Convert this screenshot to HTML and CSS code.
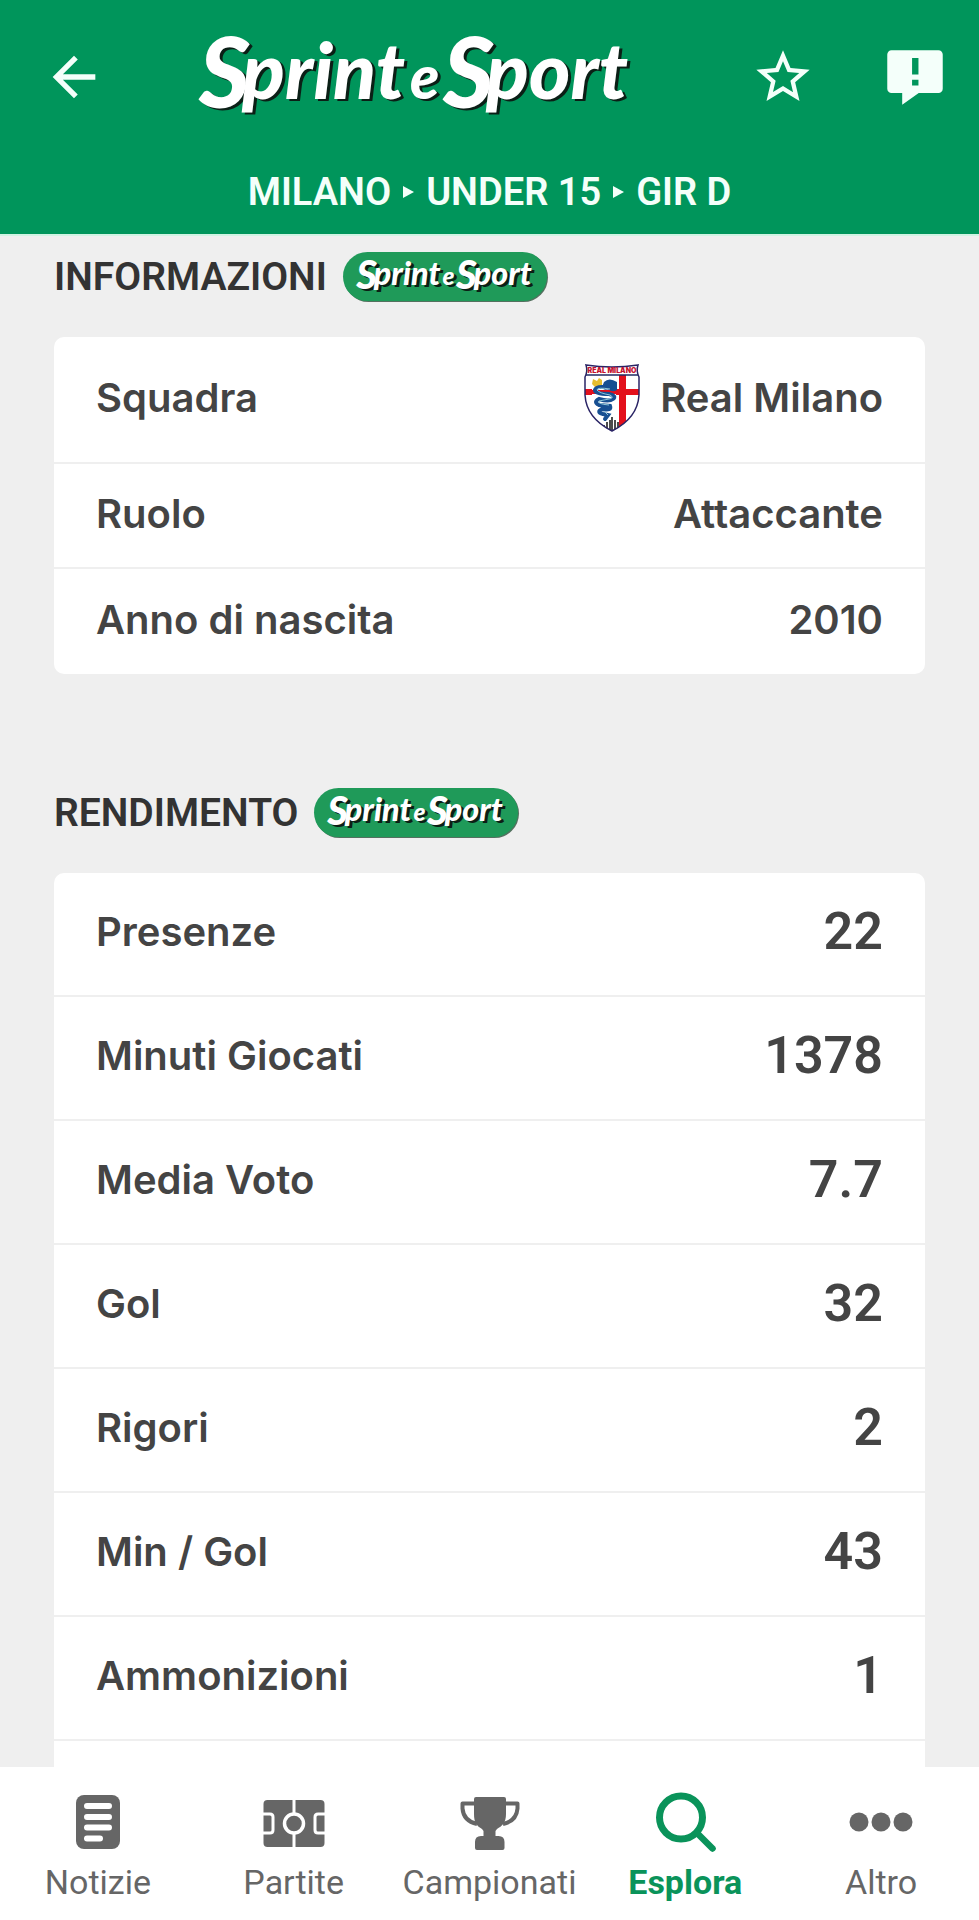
FILE: index.html
```html
<!DOCTYPE html>
<html lang="it">
<head>
    <meta charset="UTF-8">
    <meta name="viewport" content="width=device-width, initial-scale=1">
    <title>Sprint e Sport</title>
    <link rel="stylesheet" href="styles.css">
</head>
<body>
    <!-- === LOGO === -->
    <svg class="sprites" aria-hidden="true">
        <symbol id="logo" viewBox="0 0 440 88">
            <g class="logo-text">
                <text class="logo-cap" x="3" y="75">S</text>
                <text class="logo-word" x="46" y="66">print</text>
                <text class="logo-e" x="214" y="66">e</text>
                <text class="logo-cap" x="247" y="75">S</text>
                <text class="logo-word" x="290" y="66">port</text>
            </g>
        </symbol>
    </svg>

    <!-- === HEADER === -->
    <header class="header">
        <div class="topbar">
            <button class="icon-btn" aria-label="Indietro">
                <svg viewBox="0 0 24 24"><path d="M20 11H7.83l5.59-5.59L12 4l-8 8 8 8 1.41-1.41L7.83 13H20z"/></svg>
            </button>
            <svg class="logo" role="img" aria-label="Sprint e Sport"><use href="#logo"/></svg>
            <div class="actions">
                <button class="icon-btn" aria-label="Preferiti">
                    <svg viewBox="0 0 24 24"><path d="M22 9.24l-7.19-.62L12 2 9.19 8.63 2 9.24l5.46 4.73L5.82 21 12 17.27 18.18 21l-1.63-7.03zM12 15.4l-3.76 2.27 1-4.28-3.32-2.88 4.38-.38L12 6.1l1.71 4.04 4.38.38-3.32 2.88 1 4.28z"/></svg>
                </button>
                <button class="icon-btn" aria-label="Segnala">
                    <svg viewBox="0 0 24 24"><path fill-rule="evenodd" d="M3.200 2h17.600A1.600 1.600 0 0 1 22.400 3.600v12.800a1.600 1.600 0 0 1-1.600 1.600h-7.400l-6.200 4.400V18H3.200A1.600 1.600 0 0 1 1.600 16.400V3.600A1.600 1.600 0 0 1 3.200 2zM10.900 4.900v6.200h2.400V4.900zM10.900 13v2.200h2.400V13z"/></svg>
                </button>
            </div>
        </div>
        <div class="breadcrumb">
            <span>MILANO</span>
            <i class="arrow"></i>
            <span>UNDER 15</span>
            <i class="arrow"></i>
            <span>GIR D</span>
        </div>
    </header>

    <!-- === CONTENT === -->
    <main class="content">
        <section class="section">
            <div class="section-head">
                <h2>INFORMAZIONI</h2>
                <span class="pill"><svg role="img" aria-label="Sprint e Sport"><use href="#logo"/></svg></span>
            </div>
            <table class="card info">
                <tr class="team-row">
                    <th scope="row">Squadra</th>
                    <td>
                        <div class="team">
                            <svg class="crest" viewBox="0 0 56 70" aria-hidden="true">
                                <clipPath id="shield"><path d="M2 2Q28 6 54 2Q52 8 55 14V32C54 49 42 61 28 68C14 61 2 49 1 32V14Q4 8 2 2z"/></clipPath>
                                <g clip-path="url(#shield)">
                                    <path fill="#fff" d="M0 0h56v70H0z"/>
                                    <path fill="#e3101c" d="M35 12h7v56h-7zM0 26h56v6H0z"/>
                                    <path fill="#fff" d="M8 14h24v20H8z"/>
                                    <path fill="#e3101c" d="M8 27h24v4H8z"/>
                                    <path fill="none" stroke="#1f2a63" stroke-width="1.500" d="M0 12h56"/>
                                    <path fill="#e5bd2f" d="M9 16l4 2 2-3 3 2v6l-7 1-3-3z"/>
                                    <path fill="#174f92" d="M20 19q5-5 13 0v8q-5 3-9-1-5 2-6-2z"/>
                                    <path fill="none" stroke="#174f92" stroke-width="4" stroke-linecap="round" d="M27 25Q12 22 11 27Q11 31 25 31Q33 33 29 36Q25 39 15 36Q9 39 15 42L26 43Q28 48 18 46Q12 49 19 51L24 52L21 56"/>
                                    <path fill="none" stroke="#8ec6d8" stroke-width="1" d="M26 26Q13 24 13 27Q15 30 26 32Q31 35 25 36L15 38Q13 41 25 42M20 48l4 4"/>
                                    <path stroke="#111" stroke-width="1.500" d="M20 62v6M23 59v9M26 57v11M28 54v14M31 57v11M34 59v9M37 62v6"/>
                                </g>
                                <path fill="none" stroke="#2a2465" stroke-width="1.500" d="M2 2Q28 6 54 2Q52 8 55 14V32C54 49 42 61 28 68C14 61 2 49 1 32V14Q4 8 2 2z"/>
                                <text class="crest-text" x="28" y="10">REAL MILANO</text>
                            </svg>
                            <span>Real Milano</span>
                        </div>
                    </td>
                </tr>
                <tr><th scope="row">Ruolo</th><td>Attaccante</td></tr>
                <tr><th scope="row">Anno di nascita</th><td>2010</td></tr>
            </table>
        </section>

        <section class="section">
            <div class="section-head">
                <h2>RENDIMENTO</h2>
                <span class="pill"><svg role="img" aria-label="Sprint e Sport"><use href="#logo"/></svg></span>
            </div>
            <table class="card stats">
                <tr><th scope="row">Presenze</th><td>22</td></tr>
                <tr><th scope="row">Minuti Giocati</th><td>1378</td></tr>
                <tr><th scope="row">Media Voto</th><td>7.7</td></tr>
                <tr><th scope="row">Gol</th><td>32</td></tr>
                <tr><th scope="row">Rigori</th><td>2</td></tr>
                <tr><th scope="row">Min / Gol</th><td>43</td></tr>
                <tr><th scope="row">Ammonizioni</th><td>1</td></tr>
                <tr><td colspan="2"></td></tr>
            </table>
        </section>
    </main>

    <!-- === BOTTOM NAV === -->
    <nav class="tabs">
        <a href="#notizie" class="tab">
            <svg viewBox="0 0 64 64"><rect x="10" y="5" width="44" height="54" rx="8"/><path stroke="#fff" stroke-width="6" stroke-linecap="round" d="M21 16h22M21 27h22M21 37.500h22M21 48.500h13"/></svg>
            <span>Notizie</span>
        </a>
        <a href="#partite" class="tab">
            <svg viewBox="0 0 64 64"><rect x="1.500" y="10" width="61" height="47" rx="4"/><path fill="none" stroke="#fff" stroke-width="3" d="M32 9v49M0 24h8q3 0 3 3v13q0 3-3 3H0M64 24h-8q-3 0-3 3v13q0 3 3 3h8"/><circle cx="32" cy="33.500" r="9.500" stroke="#fff" stroke-width="3.500"/></svg>
            <span>Partite</span>
        </a>
        <a href="#campionati" class="tab">
            <svg viewBox="0 0 64 64"><path d="M17 9q0-2 2-2h28q2 0 2 2v15c0 9-4 12-9 15l-1.500 2v5h3q6 0 6 6v6q0 2-2 2H20q-2 0-2-2v-6q0-6 6-6h2.500v-5L25 39c-5-3-8-6-8-15z"/><path fill="none" stroke="#666" stroke-width="4" stroke-linejoin="round" d="M18 13.500H5.500v5Q6.500 31 20 34M48 13.500h12.500v5Q59.500 31 46 34"/></svg>
            <span>Campionati</span>
        </a>
        <a href="#esplora" class="tab active" aria-current="page">
            <svg viewBox="0 0 64 64"><g fill="none" stroke="currentColor"><circle cx="28" cy="27.500" r="21.500" stroke-width="7"/><path stroke-width="6.500" stroke-linecap="round" d="M44 43l15.500 15.500"/></g></svg>
            <span>Esplora</span>
        </a>
        <a href="#altro" class="tab">
            <svg viewBox="0 0 64 64"><circle cx="10" cy="32" r="9.500"/><circle cx="32" cy="32" r="9.500"/><circle cx="54" cy="32" r="9.500"/></svg>
            <span>Altro</span>
        </a>
    </nav>
</body>
</html>
```

FILE: styles.css
```css
/* === BASE STYLES === */
* {
    margin: 0;
    padding: 0;
    box-sizing: border-box;
}

body {
    display: flex;
    flex-direction: column;
    height: 100vh;
    overflow: hidden;
    font-family: Roboto, "Liberation Sans", sans-serif;
    font-size: 38px;
    font-weight: 600;
    line-height: 48px;
    background: #efefef;
    color: #444;
}

svg {
    display: block;
}

/* === LOGO === */
.sprites {
    display: none;
}

.logo {
    width: 440px;
    height: 88px;
    margin-left: 90px;
}

.logo-text {
    font-family: Lato, "Open Sans", sans-serif;
    font-weight: 900;
    font-style: italic;
    fill: #fff;
    text-shadow: 3px 2px 0 #0b1f16;
}

.logo-cap {
    font-size: 98px;
}

.logo-word {
    font-size: 79px;
}

.logo-e {
    font-size: 60px;
}

/* === HEADER === */
.header {
    flex: none;
    background: #00955b;
    border-bottom: 2px solid #d0f3e3;
    color: #f4fffa;
}

.topbar {
    display: flex;
    align-items: center;
    height: 153px;
    padding: 0 32px 0 42px;
}

.icon-btn {
    width: 64px;
    height: 64px;
    border: none;
    background: none;
    color: #f4fffa;
    cursor: pointer;
}

.icon-btn svg {
    width: 100%;
    height: 100%;
    fill: currentColor;
}

.actions {
    display: flex;
    gap: 68px;
    margin-left: auto;
}

.breadcrumb {
    display: flex;
    align-items: center;
    justify-content: center;
    gap: 12px;
    padding: 15px 0 18px;
}

.arrow {
    border: 6px solid transparent;
    border-left: 11px solid #f4fffa;
    border-right: 0;
}

/* === CONTENT === */
.content {
    flex: 1;
    min-height: 0;
    overflow: hidden;
    padding: 16px 54px 0;
}

.section {
    margin-bottom: 114px;
}

.section-head {
    display: flex;
    align-items: center;
    gap: 16px;
    margin-bottom: 36px;
}

.section-head h2 {
    font-size: 39px;
    font-weight: 600;
    color: #333;
}

.pill {
    padding: 6px 12px 7px;
    border-radius: 25px;
    background: #1f9a59;
    box-shadow: 1px 1px 0 #54705f;
}

.pill svg {
    width: 180px;
    height: 36px;
}

/* === CARDS === */
.card {
    width: 100%;
    border-spacing: 0;
    border-radius: 10px;
    background: #fff;
    font-family: Inter, Roboto, sans-serif;
    font-size: 40px;
}

.card th,
.card td {
    height: 124px;
    padding: 0 42px 4px;
    border-bottom: 2px solid #efefef;
    font-weight: 600;
    text-align: left;
}

.card td {
    padding-left: 0;
    text-align: right;
}

.card tr:last-child th,
.card tr:last-child td {
    border-bottom: none;
}

.info th,
.info td {
    height: 105px;
}

.info .team-row th,
.info .team-row td {
    height: 127px;
}

.stats td {
    font-family: Roboto, sans-serif;
    font-size: 52px;
}

.team {
    display: flex;
    align-items: center;
    justify-content: flex-end;
    gap: 20px;
}

.crest {
    width: 56px;
    height: 70px;
}

.crest-text {
    font-size: 7px;
    font-weight: 900;
    fill: #c4122f;
    text-anchor: middle;
}

/* === BOTTOM NAV === */
.tabs {
    flex: none;
    display: grid;
    grid-template-columns: repeat(5, 1fr);
    padding: 23px 0 15px;
    background: #fff;
}

.tab {
    display: flex;
    flex-direction: column;
    align-items: center;
    gap: 5px;
    color: #666;
    font-size: 34px;
    font-weight: 400;
    line-height: 46px;
    text-decoration: none;
}

.tab svg {
    width: 64px;
    height: 64px;
    fill: currentColor;
}

.tab.active {
    color: #0a935a;
    font-weight: 700;
}
```
